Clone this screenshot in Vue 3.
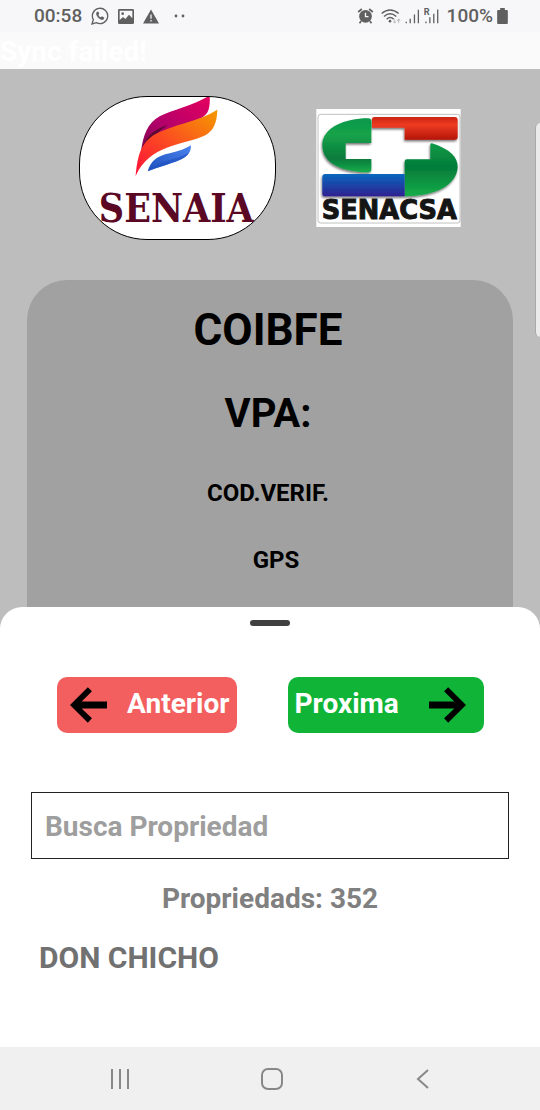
<script setup>
import { ref } from 'vue'

const query = ref('')
const properties = ref(['DON CHICHO'])
const total = 352
</script>

<template>
  <div class="phone">
    <header class="status">
      <div class="status-left">
        <span>00:58</span>
        <svg class="whatsapp" viewBox="0 0 54 54" aria-hidden="true">
          <path d="M3 51 L7 38 A23 23 0 1 1 16 47 Z" fill="none" stroke="#606060" stroke-width="4" />
          <path d="M18 14 C14 18 15 24 20 30 C26 37 33 41 38 37 L40 32 L33 28 L29 31 C26 30 23 26 22 23 L25 20 L22 14 Z" fill="#606060" />
        </svg>
        <svg class="photo" viewBox="0 0 48 45" aria-hidden="true">
          <path fill="#606060" fill-rule="evenodd" d="M4 0 H44 Q48 0 48 4 V41 Q48 45 44 45 H4 Q0 45 0 41 V4 Q0 0 4 0 Z M5 5 V33 L15 24 L22 30 L33 17 L43 28 V5 Z" />
          <circle cx="14" cy="14" r="4" fill="#606060" />
        </svg>
        <svg class="warn" viewBox="0 0 50 44" aria-hidden="true">
          <path d="M25 0 L50 44 H0 Z" fill="#606060" />
          <path d="M25 16 V29 M25 33 V38" stroke="#f7f7fa" stroke-width="4" />
        </svg>
        <svg class="more" viewBox="0 0 12 4" aria-hidden="true">
          <circle cx="2" cy="2" r="1.4" fill="#606060" /><circle cx="9" cy="2" r="1.4" fill="#606060" />
        </svg>
      </div>
      <div class="status-right">
        <svg class="alarm" viewBox="0 0 50 48" aria-hidden="true">
          <circle cx="25" cy="25" r="19" fill="#606060" />
          <path d="M3 12 L14 3 M47 12 L36 3 M12 39 L7 46 M38 39 L43 46" stroke="#606060" stroke-width="5" />
          <path d="M25 14 V26 H34" fill="none" stroke="#f7f7fa" stroke-width="4" />
        </svg>
        <svg class="wifi" viewBox="0 0 60 44" aria-hidden="true">
          <g fill="none" stroke="#606060" stroke-width="4.5">
            <path d="M2 13 Q27 -8 53 13" /><path d="M9 22 Q27 6 46 22" /><path d="M17 30 Q27 20 38 30" />
          </g>
          <circle cx="27" cy="36" r="4" fill="#606060" />
          <path d="M41 30 V41 M37 37 L41 42 L45 37 M53 42 V30 M49 35 L53 29 L57 35" fill="none" stroke="#b0b0b0" stroke-width="2.5" />
        </svg>
        <svg class="signal" viewBox="0 0 44 46" aria-hidden="true">
          <path d="M3 39 V44 M15 30 V44 M28 17 V44 M40 2 V44" stroke="#606060" stroke-width="4" />
        </svg>
        <svg class="signal roaming" viewBox="0 0 46 48" aria-hidden="true">
          <path d="M6 41 V46 M18 28 V46 M30 17 V46 M42 4 V46" stroke="#606060" stroke-width="4" />
          <text x="-1" y="20" font-family="Roboto, sans-serif" font-size="28" font-weight="700" fill="#606060">R</text>
        </svg>
        <span>100%</span>
        <svg class="battery" viewBox="0 0 32 48" aria-hidden="true">
          <path d="M9 0 H23 V6 H29 Q32 6 32 9 V45 Q32 48 29 48 H3 Q0 48 0 45 V9 Q0 6 3 6 H9 Z" fill="#606060" />
        </svg>
      </div>
    </header>

    <p class="banner">Sync failed!</p>

    <main class="screen">
      <div class="logos">
        <div class="pill">
          <svg viewBox="31 35 585 426" role="img" aria-label="SENAIA">
            <defs>
              <linearGradient id="magenta" x1="0" y1="1" x2="1" y2="0">
                <stop offset="0" stop-color="#7d0850" /><stop offset="0.4" stop-color="#b3006a" /><stop offset="1" stop-color="#e5005f" />
              </linearGradient>
              <linearGradient id="flame" x1="0" y1="1" x2="1" y2="0">
                <stop offset="0" stop-color="#ff1238" /><stop offset="0.45" stop-color="#fb4a22" /><stop offset="1" stop-color="#f59a00" />
              </linearGradient>
              <linearGradient id="azure" x1="0" y1="1" x2="1" y2="0">
                <stop offset="0" stop-color="#1d4fbd" /><stop offset="1" stop-color="#4a83ee" />
              </linearGradient>
            </defs>
            <path d="M214 200 C220 150 234 112 270 93 C310 72 375 60 420 30 C422 72 416 90 388 101 C340 120 260 132 214 200 Z" fill="url(#magenta)" />
            <path d="M213 204 C222 160 246 134 296 118 C260 142 230 166 213 212 Z" fill="#5e0a34" />
            <path d="M198 272 C203 224 208 178 252 149 C305 118 390 108 443 73 C442 112 432 138 402 152 C345 178 238 178 198 272 Z" fill="url(#flame)" />
            <path d="M198 272 C208 216 240 178 318 156 C272 170 226 190 206 236 Z" fill="#ff1744" opacity="0.6" />
            <path d="M234 258 C244 226 262 212 300 204 C328 198 349 190 364 180 C364 202 354 214 330 224 C296 238 268 244 234 258 Z" fill="url(#azure)" />
            <path d="M234 258 C262 228 310 226 358 202 C352 212 344 218 330 224 C296 238 268 244 234 258 Z" fill="#1e50c0" opacity="0.6" />
            <text x="320" y="411" text-anchor="middle" font-family="DejaVu Serif Condensed, DejaVu Serif, serif" font-weight="700" font-size="117" fill="#5b0825">SENAIA</text>
          </svg>
        </div>
        <svg class="senacsa" viewBox="33 27 433 354" role="img" aria-label="SENACSA">
          <defs>
            <linearGradient id="leafLeft" x1="0" y1="0" x2="0" y2="1">
              <stop offset="0" stop-color="#07984b" /><stop offset="0.3" stop-color="#16a34a" /><stop offset="0.75" stop-color="#087a3c" /><stop offset="1" stop-color="#17ad4b" />
            </linearGradient>
            <linearGradient id="leafRight" x1="0" y1="0" x2="0" y2="1">
              <stop offset="0" stop-color="#0c9b48" /><stop offset="0.45" stop-color="#047b3a" /><stop offset="1" stop-color="#16ad49" />
            </linearGradient>
            <linearGradient id="redBar" x1="0" y1="0" x2="0" y2="1">
              <stop offset="0" stop-color="#cc2413" /><stop offset="0.35" stop-color="#ee3b22" /><stop offset="1" stop-color="#b51507" />
            </linearGradient>
            <linearGradient id="blueBar" x1="0" y1="0" x2="0" y2="1">
              <stop offset="0" stop-color="#0868bd" /><stop offset="1" stop-color="#302090" />
            </linearGradient>
            <filter id="drop" x="-10%" y="-10%" width="120%" height="130%">
              <feDropShadow dx="-2" dy="5" stdDeviation="3" flood-color="#000" flood-opacity="0.55" />
            </filter>
          </defs>
          <rect x="33" y="27" width="433" height="354" fill="#fff" />
          <rect x="38" y="43" width="426" height="326" rx="8" fill="#fff" stroke="#a0a0a0" stroke-width="2" />
          <g filter="url(#drop)">
            <path d="M188 55 Q198 55 198 63 V129 H121 V177 H198 V208 Q198 217 188 217 C110 217 51 190 51 136 C51 82 120 55 188 55 Z" fill="url(#leafLeft)" />
            <path d="M207 51 H448 Q457 51 457 60 V111 Q457 119 448 119 H298 V83 H200 V58 Q200 51 207 51 Z" fill="url(#redBar)" />
            <path d="M380 130 C435 148 458 172 457 202 C454 255 390 289 298 289 V185 Q298 178 305 178 H375 V134 Q375 128 380 130 Z" fill="url(#leafRight)" />
            <path d="M60 222 H298 V289 H58 Q51 289 51 282 V231 Q51 222 60 222 Z" fill="url(#blueBar)" />
          </g>
          <text x="252" y="356" text-anchor="middle" font-family="DejaVu Sans, sans-serif" font-weight="700" font-size="77" fill="#151515" stroke="#151515" stroke-width="3">SENACSA</text>
        </svg>
      </div>

      <section class="card">
        <h1>COIBFE</h1>
        <h2>VPA:</h2>
        <p>COD.VERIF.</p>
        <p class="gps">GPS</p>
      </section>
      <div class="edge-panel"></div>
    </main>

    <section class="sheet">
      <div class="grabber"></div>
      <div class="actions">
        <button type="button" class="prev">
          <svg viewBox="204 289 108 104" aria-hidden="true">
            <path d="M204 341 L256 289 L268 301 L238 331 H312 V351 H238 L268 380 L256 393 Z" />
          </svg>
          <span>Anterior</span>
        </button>
        <button type="button" class="next">
          <span>Proxima</span>
          <svg viewBox="1242 289 108 104" aria-hidden="true">
            <path d="M1350 341 L1298 289 L1286 301 L1316 331 H1242 V351 H1316 L1286 380 L1298 393 Z" />
          </svg>
        </button>
      </div>
      <input v-model="query" class="search" type="text" placeholder="Busca Propriedad" aria-label="Busca Propriedad" />
      <p class="count">Propriedads: {{ total }}</p>
      <ul class="list">
        <li v-for="name in properties" :key="name">{{ name }}</li>
      </ul>
    </section>

    <nav class="navbar">
      <button type="button" aria-label="Recientes">
        <svg viewBox="0 0 24 24"><path d="M3 2 V22 M11 2 V22 M19 2 V22" /></svg>
      </button>
      <button type="button" aria-label="Inicio">
        <svg viewBox="0 0 24 24"><rect x="2" y="2" width="20" height="20" rx="6" /></svg>
      </button>
      <button type="button" aria-label="Atrás">
        <svg viewBox="0 0 24 24"><path d="M17 3 L7 12 L17 21" /></svg>
      </button>
    </nav>
  </div>
</template>

<style>
body {
  margin: 0;
}
</style>

<style scoped>
.phone {
  display: flex;
  flex-direction: column;
  min-height: 100vh;
  background: #bdbdbd;
  font-family: Roboto, "Liberation Sans", sans-serif;
  font-weight: 700;
}
.phone * {
  box-sizing: border-box;
}
h1,
h2,
p,
ul {
  margin: 0;
  padding: 0;
}
button {
  border: 0;
  padding: 0;
  font: inherit;
  background: none;
}
svg {
  display: block;
  flex: none;
}
.status {
  display: flex;
  justify-content: space-between;
  height: 32px;
  padding: 0 32px 0 34px;
  background: #f7f7fa;
  color: #606060;
  font-size: 19px;
  font-weight: 500;
  line-height: 32px;
}
.status-left,
.status-right {
  display: flex;
  align-items: center;
}
.status-left {
  gap: 9px;
}
.status-right {
  gap: 4px;
}
.whatsapp {
  width: 18px;
  height: 18px;
}
.photo {
  width: 16px;
  height: 15px;
}
.warn {
  width: 16px;
  height: 15px;
}
.more {
  width: 12px;
  height: 4px;
  margin-left: 6px;
}
.alarm {
  width: 17px;
  height: 16px;
  margin-right: 3px;
}
.wifi {
  width: 20px;
  height: 15px;
}
.signal {
  width: 15px;
  height: 15px;
}
.roaming {
  height: 16px;
  margin-right: 4px;
}
.battery {
  width: 11px;
  height: 16px;
}
.banner {
  height: 37px;
  background: #fafafa;
  color: #fff;
  font-size: 28px;
  line-height: 40px;
}
.screen {
  position: relative;
  display: flex;
  flex-direction: column;
  flex: 1;
  padding: 27px 27px 0;
}
.logos {
  display: flex;
  justify-content: center;
  align-items: center;
  gap: 40px;
}
.pill {
  width: 197px;
  height: 144px;
  overflow: hidden;
  border: 1px solid #000;
  border-radius: 68px;
  background: #fff;
}
.pill svg {
  width: 195px;
  height: 142px;
}
.senacsa {
  width: 145px;
  height: 118px;
}
.card {
  flex: 1;
  margin-top: 40px;
  padding: 20px 4px 20px 0;
  border-radius: 40px 40px 0 0;
  background: #a1a1a1;
  color: #000;
  text-align: center;
}
h1 {
  font-size: 44px;
  line-height: 60px;
}
h2 {
  margin-top: 24px;
  font-size: 40px;
  line-height: 60px;
}
.card p {
  margin-top: 31px;
  font-size: 24px;
  line-height: 36px;
}
.card .gps {
  padding-left: 16px;
}
.edge-panel {
  position: absolute;
  top: 54px;
  right: 0;
  width: 5px;
  height: 214px;
  border-left: 1px solid #a8a8a8;
  border-radius: 6px 0 0 6px;
  background: #ebebeb;
}
.sheet {
  position: relative;
  min-height: 440px;
  margin-top: -20px;
  padding: 13px 31px 0;
  border-radius: 22px 22px 0 0;
  background: #fff;
}
.grabber {
  width: 40px;
  height: 6px;
  margin: 0 auto;
  border-radius: 3px;
  background: #404040;
}
.actions {
  display: flex;
  justify-content: center;
  gap: 51px;
  margin-top: 51px;
}
.actions button {
  display: flex;
  align-items: center;
  justify-content: space-between;
  height: 56px;
  border-radius: 10px;
  color: #fff;
  font-size: 28px;
  line-height: 52px;
}
.actions span {
  height: 54px;
}
.actions svg {
  width: 37px;
  height: 36px;
}
.actions .prev {
  width: 180px;
  padding: 0 7px 0 13px;
  background: #f35f5f;
}
.actions .next {
  width: 196px;
  padding: 0 18px 0 7px;
  background: #10b437;
}
.search {
  display: block;
  width: 100%;
  height: 67px;
  margin-top: 59px;
  padding: 2px 13px 0;
  border: 1px solid #222;
  border-radius: 0;
  background: #fff;
  color: #222;
  font: inherit;
  font-size: 28px;
  outline: 0;
}
.search::placeholder {
  color: #9e9e9e;
  opacity: 1;
}
.count {
  margin-top: 20px;
  color: #808080;
  font-size: 28px;
  line-height: 40px;
  text-align: center;
}
.list {
  margin-top: 19px;
  padding: 0 8px;
  list-style: none;
  color: #717171;
  font-size: 30px;
  line-height: 40px;
}
.navbar {
  display: grid;
  grid-template-columns: repeat(3, 151px);
  justify-content: center;
  height: 63px;
  padding-left: 4px;
  background: #f0f0f0;
}
.navbar button {
  display: grid;
  place-items: center;
}
.navbar svg {
  width: 24px;
  height: 24px;
  fill: none;
  stroke: #888;
  stroke-width: 2;
}
</style>
